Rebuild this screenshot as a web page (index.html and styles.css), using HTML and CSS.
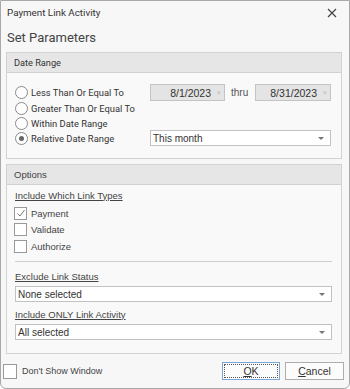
FILE: index.html
```html
<!DOCTYPE html>
<html>
<head>
  <title>Payment Link Activity</title>
  <meta name="viewport" content="width=device-width, initial-scale=1.0">
  <link rel="stylesheet" href="styles.css">
</head>
<body>
  <div class="window">
    <div class="titlebar">
      <span class="title-text">Payment Link Activity</span>
      <span class="close-btn">
        <svg width="10" height="10" viewBox="0 0 10 10"><path d="M1 1 L9 9 M9 1 L1 9" stroke="#444" stroke-width="1.2" fill="none"/></svg>
      </span>
    </div>
    <h1 class="heading">Set Parameters</h1>

    <div class="group">
      <div class="group-header">Date Range</div>
      <div class="group-body date-grid">
        <label class="radio-row"><span class="radio"></span>Less Than Or Equal To</label>
        <div class="date-box">8/1/2023<span class="spin">&#9662;</span></div>
        <div class="thru">thru</div>
        <div class="date-box">8/31/2023<span class="spin">&#9662;</span></div>

        <label class="radio-row"><span class="radio"></span>Greater Than Or Equal To</label>
        <label class="radio-row"><span class="radio"></span>Within Date Range</label>
        <label class="radio-row"><span class="radio checked"></span>Relative Date Range</label>
        <div class="dropdown span-3">This month<span class="arrow"></span></div>
      </div>
    </div>

    <div class="group options">
      <div class="group-header plain">Options</div>
      <div class="group-body options-body">
        <div class="section-label">Include Which Link Types</div>
        <label class="check-row"><span class="checkbox checked">
          <svg width="10" height="10" viewBox="0 0 10 10"><path d="M1.5 5.5 L4 8 L8.5 2" stroke="#777" stroke-width="1" fill="none"/></svg>
        </span>Payment</label>
        <label class="check-row"><span class="checkbox"></span>Validate</label>
        <label class="check-row"><span class="checkbox"></span>Authorize</label>

        <div class="separator"></div>

        <div class="section-label">Exclude Link Status</div>
        <div class="dropdown">None selected<span class="arrow"></span></div>
        <div class="section-label">Include ONLY Link Activity</div>
        <div class="dropdown">All selected<span class="arrow"></span></div>
      </div>
    </div>

    <div class="footer">
      <label class="check-row dont-show"><span class="checkbox big"></span>Don't Show Window</label>
      <div class="buttons">
        <button class="btn btn-ok"><span class="focus"><u>O</u>K</span></button>
        <button class="btn"><u>C</u>ancel</button>
      </div>
    </div>
  </div>
</body>
</html>
```

FILE: styles.css
```css
body {
  margin: 0;
  background: #ffffff;
}
.window {
  width: 350px;
  height: 389px;
  box-sizing: border-box;
  border: 1px solid #a9a9a9;
  border-radius: 0 0 6px 6px;
  background-color: #f7f7f7;
  font-family: Roboto, "Open Sans", sans-serif;
  color: #333;
  display: flex;
  flex-direction: column;
}
.titlebar {
  height: 23px;
  display: flex;
  align-items: center;
  justify-content: space-between;
  padding: 0 12px 0 6px;
}
.title-text {
  font-size: 9.8px;
  color: #333;
}
.close-btn {
  display: flex;
}
.heading {
  margin: 3px 0 0 6px;
  font-family: Roboto, sans-serif;
  font-weight: normal;
  font-size: 13px;
  color: #444;
  height: 22px;
  line-height: 22px;
}
.group {
  margin: 3px 7px 0 5px;
  border: 1px solid #d2d2d2;
  background-color: #f9f9f9;
}
.group-header {
  height: 19px;
  background-color: #e6e6e6;
  border-bottom: 1px solid #d2d2d2;
  font-family: Roboto, sans-serif;
  font-size: 9.2px;
  display: flex;
  align-items: center;
  padding-left: 7px;
}
.group-header.plain {
  font-family: "Liberation Sans", Arial, sans-serif;
  font-size: 9.5px;
  color: #444;
}
.date-grid {
  display: grid;
  grid-template-columns: 143px 75px 30px 76px;
  grid-template-rows: 17px 15px 14px 16px;
  padding: 11px 0 12px 0;
  font-family: Roboto, sans-serif;
  font-size: 9.4px;
}
.radio-row {
  display: flex;
  align-items: center;
  grid-column: 1;
  padding-left: 8px;
}
.radio {
  width: 11px;
  height: 11px;
  border: 1px solid #8a8a8a;
  border-radius: 50%;
  background-color: #fff;
  margin-right: 3px;
  position: relative;
}
.radio.checked::after {
  content: "";
  position: absolute;
  left: 3px;
  top: 3px;
  width: 5px;
  height: 5px;
  border-radius: 50%;
  background-color: #666;
}
.date-box {
  box-sizing: border-box;
  background-color: #e4e4e4;
  border: 1px solid #c4c4c4;
  font-family: "Liberation Sans", Arial, sans-serif;
  font-size: 10.5px;
  display: flex;
  align-items: center;
  justify-content: flex-end;
  padding-right: 3px;
}
.spin {
  color: #c8c8c8;
  font-size: 7px;
  margin-left: 6px;
}
.thru {
  font-family: "Liberation Sans", Arial, sans-serif;
  font-size: 10px;
  color: #555;
  display: flex;
  align-items: center;
  padding-left: 6px;
}
.dropdown {
  box-sizing: border-box;
  height: 16px;
  flex: none;
  background-color: #fff;
  border: 1px solid #c2c2c2;
  font-family: "Liberation Sans", Arial, sans-serif;
  font-size: 10px;
  color: #333;
  display: flex;
  align-items: center;
  justify-content: space-between;
  padding: 0 6px 0 2px;
}
.span-3 {
  grid-column: 2 / 5;
  grid-row: 4;
}
.arrow {
  width: 0;
  height: 0;
  border-left: 3px solid transparent;
  border-right: 3px solid transparent;
  border-top: 3px solid #777;
}
.options {
  margin-top: 5px;
}
.options-body {
  padding: 3px 9px 13px 8px;
  font-family: "Liberation Sans", Arial, sans-serif;
  font-size: 9.5px;
  color: #444;
  display: flex;
  flex-direction: column;
}
.section-label {
  text-decoration: underline;
  height: 14px;
  margin-bottom: 3px;
  flex: none;
  display: flex;
  align-items: center;
  color: #444;
}
.check-row {
  display: flex;
  align-items: center;
  height: 16.5px;
  flex: none;
}
.options-body .checkbox {
  margin-left: -1px;
}
.checkbox {
  box-sizing: border-box;
  width: 13px;
  height: 13px;
  border: 1px solid #999;
  background-color: #fff;
  margin-right: 4px;
  display: flex;
  align-items: center;
  justify-content: center;
}
.separator {
  height: 1px;
  flex: none;
  background-color: #cfcfcf;
  margin: 6.5px 0 7px 0;
}
.options-body .dropdown + .section-label {
  margin-top: 5px;
}
.footer {
  margin-top: auto;
  height: 26px;
  display: flex;
  align-items: flex-start;
  justify-content: space-between;
  padding: 0 5px 0 2px;
  font-family: "Liberation Sans", Arial, sans-serif;
  font-size: 9px;
  color: #444;
}
.dont-show {
  height: 16px;
  margin-top: 1px;
}
.checkbox.big {
  width: 14px;
  height: 15px;
  margin-right: 5px;
}
.buttons {
  display: flex;
  gap: 5px;
}
.btn {
  box-sizing: border-box;
  height: 18px;
  width: 59px;
  background-color: #fcfcfc;
  border: 1px solid #adadad;
  font-family: "Liberation Sans", Arial, sans-serif;
  font-size: 10.5px;
  color: #333;
  padding: 0;
  display: flex;
  align-items: center;
  justify-content: center;
}
.btn-ok {
  width: 58px;
  border-color: #7ba5d6;
  padding: 1px;
}
.focus {
  flex: 1;
  align-self: stretch;
  border: 1px dotted #555;
  display: flex;
  align-items: center;
  justify-content: center;
}
```
